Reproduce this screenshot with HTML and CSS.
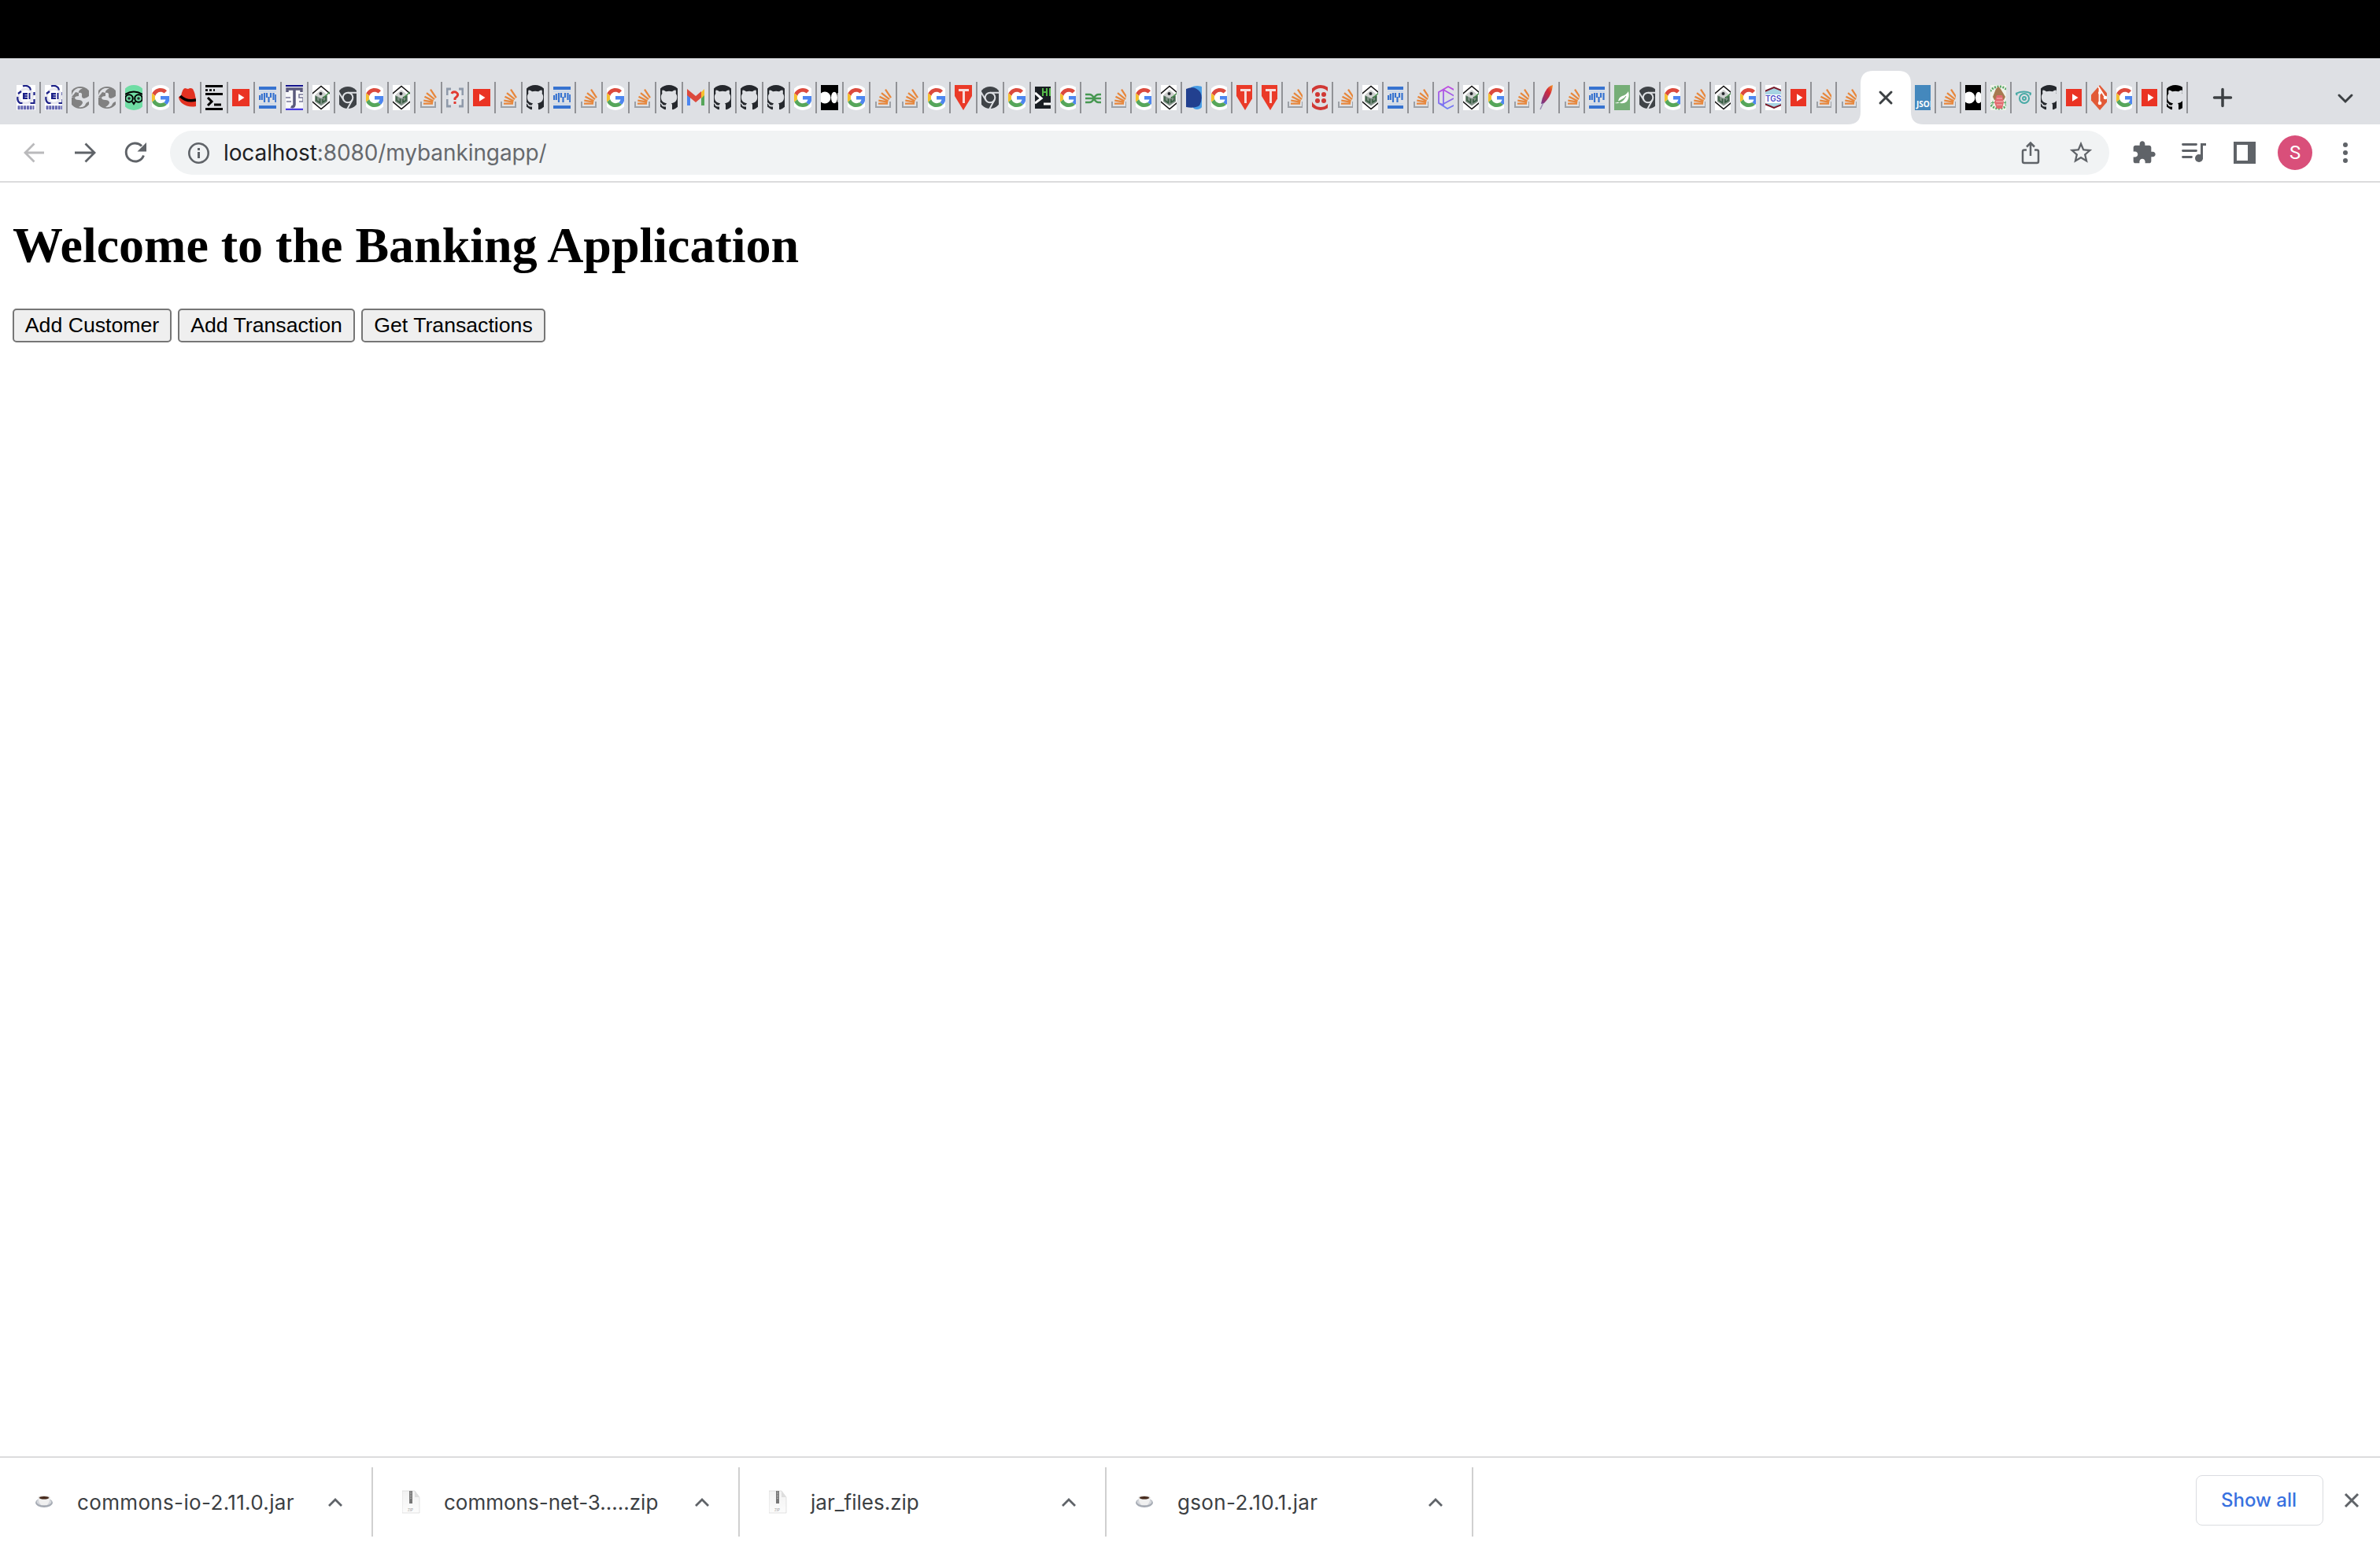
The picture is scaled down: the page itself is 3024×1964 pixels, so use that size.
FILE: index.html
```
<!DOCTYPE html>
<html lang="en">
<head>
<meta charset="utf-8">
<title>Banking Application</title>
<link rel="stylesheet" href="styles.css">
</head>
<body>
<svg class="sprites" aria-hidden="true">
  <defs>
    <linearGradient id="feather-fill" x1="1" y1="0" x2="0" y2="1"><stop offset="0" stop-color="#f79a23"/><stop offset=".35" stop-color="#d4293a"/><stop offset="1" stop-color="#6d3b8f"/></linearGradient>
    <linearGradient id="cube-line" x1="0" y1="0" x2="0" y2="1"><stop offset="0" stop-color="#c14be0"/><stop offset="1" stop-color="#6c7cf5"/></linearGradient>
    <linearGradient id="paper" x1="0" y1="0" x2="0" y2="1"><stop offset="0" stop-color="#f2f2f2"/><stop offset="1" stop-color="#fcfcfc"/></linearGradient>
    <g id="arctic"><rect width="24" height="32" fill="#fff"/><circle cx="11.500" cy="14" r="9" fill="none" stroke="#e6e6ee" stroke-width="3"/><path d="M8 1.500q5-2 9 2l1 3M1.500 15q-1 6 3 8h3M22.500 9v4M22.500 18v5h-5M2 11l4-3" fill="none" stroke="#1c2188" stroke-width="2.200"/><path d="M8 10h6v8H8zM15.500 10h2v8h-2z" fill="#1c2188"/><path d="M10.500 12.700h3.500M10.500 15.400h3.500" stroke="#c9cae8"/><path d="M1.500 28.700h21" stroke="#6466b0" stroke-width="5" stroke-dasharray="3 .8"/></g>
    <g id="globe"><ellipse cx="11" cy="16" rx="14" ry="14" fill="#818181"/><path d="M14 4q-6 3-5 6 5-1 4 4 0 3 3 3 4-1 6-3v7q-4 1-5 5-3 3-8 2 5-3 5-6-1-3-5-3-5 0-5-3-2-1-4 0v-3q2-7 8-9z" fill="#dee0e4"/><path d="M0 15q3-3 5-6l4 1v4q-4 0-5 2z" fill="#818181"/></g>
    <g id="trip"><circle cx="11" cy="16" r="16" fill="#6fdda4"/><circle cx="5" cy="17" r="4.800" fill="none" stroke="#000" stroke-width="2"/><circle cx="17" cy="17" r="4.800" fill="none" stroke="#000" stroke-width="2"/><circle cx="5" cy="17" r="1.800"/><circle cx="17" cy="17" r="1.800"/><path d="M0 12q11-7 22 0M9 21l2 3 2-3" fill="none" stroke="#000" stroke-width="2"/></g>
    <g id="google"><circle cx="11" cy="16" r="16" fill="#fff"/><g transform="translate(-1 4) scale(.5)"><path fill="#dc4a3d" d="M24 9.500c3.540 0 6.710 1.220 9.210 3.600l6.850-6.850C35.900 2.380 30.470 0 24 0 14.620 0 6.510 5.380 2.560 13.220l7.980 6.190C12.430 13.720 17.740 9.500 24 9.500z"/><path fill="#4d86f0" d="M46.980 24.550c0-1.570-.15-3.090-.38-4.550H24v9.020h12.940c-.58 2.960-2.260 5.480-4.780 7.180l7.730 6c4.510-4.180 7.090-10.360 7.090-17.650z"/><path fill="#f5c02e" d="M10.530 28.590c-.48-1.450-.76-2.990-.76-4.590s.27-3.140.76-4.590l-7.980-6.190C.92 16.460 0 20.120 0 24c0 3.880.92 7.540 2.560 10.780l7.970-6.190z"/><path fill="#56a65a" d="M24 48c6.480 0 11.930-2.130 15.890-5.810l-7.730-6c-2.150 1.450-4.920 2.300-8.160 2.300-6.260 0-11.570-4.220-13.470-9.910l-7.980 6.190C6.510 42.620 14.620 48 24 48z"/></g></g>
    <g id="redhat"><path d="M3 14Q5 4 8 4l4 1q3-2 6 0 3 6 3 9l1 4v9Q12 29 4 23q-4-4-4-8z" fill="#e23222"/><path d="M2 14q8 8 20 5" fill="none" stroke="#000" stroke-width="3.500"/></g>
    <g id="terminal"><path d="M0 1.500h22M0 11.500h22M0 30.500h22M11 25h9" stroke="#000" stroke-width="3"/><path d="M0 6.500h12" stroke="#000" stroke-width="2.500" stroke-dasharray="3 2"/><path d="M3 16l5 5-5 5" fill="none" stroke="#000" stroke-width="3"/></g>
    <g id="youtube"><path d="M0 5h22v22H0z" fill="#ea3323"/><path d="M8 11.300v9.400l7.500-4.700z" fill="#fff"/></g>
    <g id="mvn"><path d="M0 4h22M0 28h22" stroke="#3773d0" stroke-width="4"/><path d="M0 8h22M0 24h22" stroke="#ccd9eb" stroke-width="2"/><path d="M1 13v6M3.800 11v8M7 10v12M10 10v6M12.500 15v7M15 10v6M18.500 10v9M21.300 12v10" fill="none" stroke="#3773d0" stroke-width="2.200"/></g>
    <g id="tjs"><path d="M0 0h22v32H0z" fill="#f8f8fa"/><path d="M0 1h22" stroke="#12128c" stroke-width="2"/><path d="M0 31h22" stroke="#4a3be0" stroke-width="2.500"/><path d="M2 9V5h18v4M11 5v20q-1 4-4 2" fill="none" stroke="#59597c" stroke-width="3.500"/><path d="M0 16h6M1 21h6M22 12h-5v4h5v5h-5" fill="none" stroke="#777799" stroke-width="1.500"/></g>
    <g id="cube"><path d="M0 0h22v32H0z" fill="#fff"/><path d="M-1 11.500L11 1.500l12 10M-1 20.500l12 10 12-10" fill="none" stroke="#111" stroke-width="1.500"/><path d="M4 12l7-6 7 6v10l-7 5-7-5z" fill="#cfd1d0"/><path d="M3 13l8 4 8-4v8l-8 5-8-5z" fill="#7f9085"/><path d="M5 14.500v5l4.500 3v-5M13 18v4l4-2.500v-5l-4 1.500" fill="none" stroke="#335a3e" stroke-width="1.500"/><path d="M14 16l8-7" stroke="#4c9050" stroke-width="1.600"/><circle cx="10.500" cy="11" r="2"/></g>
    <g id="chrome"><circle cx="11" cy="16" r="14" fill="#3f4347"/><circle cx="11" cy="16" r="6.300" fill="#3f4347" stroke="#dee0e4" stroke-width="2"/><path d="M11 9.700h14M5.500 19L-2 7M16.500 19L10 31" stroke="#dee0e4" stroke-width="2"/></g>
    <g id="stack"><path d="M2 21v7h18v-7" fill="none" stroke="#9da1a7" stroke-width="2"/><path d="M5 24h12M5.300 20l12 2M6.500 15l11 5.500M9 10.500l10 8M14 6l7 10.500" transform="translate(0 -.3)" stroke="#e7873c" stroke-width="2.300"/></g>
    <g id="missing"><path d="M6 5H1v8M16 5h5v8M1 18v9h5M21 18v9h-5" fill="none" stroke="#8f9aaa" stroke-width="3"/><path d="M3 7h16v18H3z" fill="#e4e7eb"/><path d="M7 11q1-3 5-2 4 2 2 5l-3 3v2M11 21v3" fill="none" stroke="#e13b32" stroke-width="3"/></g>
    <path id="github" transform="translate(-5 0) scale(2)" d="M8 0C3.580 0 0 3.580 0 8c0 3.540 2.290 6.530 5.470 7.590.4.070.55-.17.55-.38 0-.19-.01-.82-.01-1.490-2.010.37-2.530-.49-2.690-.94-.09-.23-.48-.94-.82-1.130-.28-.15-.68-.52-.01-.53.63-.01 1.080.58 1.230.82.72 1.210 1.870.87 2.330.66.070-.52.280-.87.510-1.070-1.780-.2-3.640-.89-3.640-3.950 0-.87.310-1.590.820-2.150-.08-.2-.36-1.020.08-2.120 0 0 .67-.21 2.200.82.640-.18 1.320-.27 2-.27.680 0 1.360.09 2 .27 1.530-1.040 2.200-.82 2.200-.82.440 1.100.160 1.920.080 2.120.510.560.820 1.270.820 2.150 0 3.070-1.870 3.750-3.650 3.950.290.250.540.730.540 1.480 0 1.070-.01 1.930-.01 2.200 0 .21.150.46.550.38A8.013 8.013 0 0016 8c0-4.420-3.580-8-8-8z"/>
    <g id="gmail"><path d="M0 8v18h4V12z" fill="#4d86f0"/><path d="M22 8v18h-4V12z" fill="#56a65a"/><path d="M18 9l4-4v8l-4 4z" fill="#f5c02e"/><path d="M0 5l11 9 7-6v8l-7 6L0 13z" fill="#dc4a3d"/></g>
    <g id="medium"><path d="M0 0h22v32H0z" fill="#000"/><ellipse cx="5" cy="16" rx="7.500" ry="7.500" fill="#fff"/><ellipse cx="17" cy="16" rx="4" ry="7.300" fill="#fff"/><path d="M21.800 10v12" stroke="#fff"/></g>
    <g id="tee"><path d="M0 0h22v14L11 32 0 14z" fill="#ea3a28"/><path d="M5 6.500h13M11.500 6v17" stroke="#f7dcda" stroke-width="3"/></g>
    <g id="hq"><path d="M0 2h22v28H0z" fill="#191e23"/><path d="M0 10l8 7-8 6M11 24h11" fill="none" stroke="#fff" stroke-width="3"/><path d="M10 4v10M15 4v10M10 9h5M22 5h-3v8h3" fill="none" stroke="#55b948" stroke-width="2"/></g>
    <path id="gfg" d="M0 12h5q4 0 6 5 2-5 6-5h5M0 22h5q4 0 6-5 2 5 6 5h5M0 17h22" fill="none" stroke="#479852" stroke-width="2.500"/>
    <g id="blob"><path d="M6 3q8-4 16 0v23q-5 7-12 4L4 22z" fill="#489de5"/><path d="M0 5q11-5 18 4 4 8-1 17-6 4-17 2z" fill="#22408f"/></g>
    <g id="twilio"><circle cx="11" cy="16" r="14" fill="none" stroke="#d03834" stroke-width="4"/><g fill="#d03834"><circle cx="7" cy="12" r="3"/><circle cx="15" cy="12" r="3"/><circle cx="7" cy="20" r="3"/><circle cx="15" cy="20" r="3"/></g></g>
    <path id="hexagon" d="M22 7L13 2 1 9v14l11 7 10-5M1 9l6-3v19l-6-2M7 6l14 8M7 24l13-7" fill="none" stroke="url(#cube-line)" stroke-width="1.800"/>
    <g id="feather"><path d="M2 31L8 18" stroke="#9b8bb1" stroke-width="1.500"/><path d="M18 0q-6 1-10 9-4 8-5 15l4-1Q15 15 17 6z" fill="url(#feather-fill)"/></g>
    <g id="leaf"><path d="M0 0h22v32H0z" fill="#76ae77"/><path d="M18 8q2 8-2 13-5 4-11 1 0-6 5-8 5-1 8-6zM1 23q8 2 14-8" fill="#fff"/><path d="M2 22q9-1 13-8" fill="none" stroke="#76ae77"/></g>
    <g id="tgs"><path d="M0 0h22v32H0z" fill="#fff"/><path d="M-1 8l12-6 12 6v16l-12 6-12-6z" fill="#a6d3e2"/><path d="M0 12h22v11H0z" fill="#fff"/><path d="M-1 8l12-5 12 5M-1 24l12 5 12-5" fill="none" stroke="#7b1828" stroke-width="2"/><text x="0" y="21" font-size="10" font-family="Inter,sans-serif" font-weight="600" fill="#4848c6">TGS</text></g>
    <g id="json"><path d="M0 0h22v32H0z" fill="#4488bd"/><text x="2" y="28" font-size="10" font-family="Open Sans,sans-serif" font-weight="700" fill="#fff">JSON</text></g>
    <g id="rabbit"><path d="M0 0h22v32H0z" fill="#f0f2ea"/><circle cx="11" cy="16" r="14" fill="none" stroke="#58a866" stroke-width="3" stroke-dasharray="2 1.500"/><path d="M7 5l3-3 3 3 6 10-2 4H5l-2-4z" fill="#a77a50"/><path d="M8 13h7l2 9-2 8H8l-3-8z" fill="#e26a70"/><path d="M8 17h7M7 21h9M8 25h7" stroke="#f3c2bd"/><path d="M3 20v5M1 22.500h4M19 20v5M17 22.500h4" stroke="#58a866"/></g>
    <g id="eye" fill="none" stroke="#49aaa6" stroke-width="2"><path d="M0 11q11-5 20 0M0 10l2 3M20 10l-2 3"/><circle cx="11" cy="17" r="6"/><circle cx="11" cy="17" r="2"/></g>
    <g id="git"><path d="M11 0l14 16-14 16L-3 16z" fill="#e25a37"/><path d="M10.500 4v20M9 2l9 14" stroke="#fff" stroke-width="1.800"/><g fill="#fff"><circle cx="11" cy="10" r="2"/><circle cx="11" cy="23" r="2.300"/><circle cx="18" cy="16" r="2.300"/></g></g>
    <g id="cup"><ellipse cx="11" cy="17" rx="11" ry="6" fill="#a4a9b2"/><ellipse cx="11" cy="16" rx="9.500" ry="4.500" fill="#d4d7dc"/><path d="M3.500 10h15q0 7-4 10h-7q-4-3-4-10z" fill="#f0f0f0"/><ellipse cx="11" cy="10.500" rx="7.500" ry="2.500" fill="#d8d5d2"/><ellipse cx="11" cy="10.700" rx="6" ry="1.700" fill="#46291b"/></g>
    <g id="zip"><path d="M0 2h16l6 8v20H0z" fill="url(#paper)" stroke="#d5d5d5" stroke-width=".7"/><path d="M16 2v8h6z" fill="#dedede"/><path d="M11 2v16" stroke="#777" stroke-width="4"/><path d="M11 3v9" stroke="#bbb" stroke-width="1.500" stroke-dasharray="1 1"/><text x="7" y="28" font-size="4.500" font-family="Inter,sans-serif" fill="#999">ZIP</text></g>
  </defs>
</svg>

<div class="bezel"></div>
<nav class="tab-strip">
  <div class="tab first"><svg><use href="#arctic"/></svg></div>
  <div class="tab"><svg><use href="#arctic"/></svg></div>
  <div class="tab"><svg><use href="#globe"/></svg></div>
  <div class="tab"><svg><use href="#globe"/></svg></div>
  <div class="tab"><svg><use href="#trip"/></svg></div>
  <div class="tab"><svg><use href="#google"/></svg></div>
  <div class="tab"><svg><use href="#redhat"/></svg></div>
  <div class="tab"><svg><use href="#terminal"/></svg></div>
  <div class="tab"><svg><use href="#youtube"/></svg></div>
  <div class="tab"><svg><use href="#mvn"/></svg></div>
  <div class="tab"><svg><use href="#tjs"/></svg></div>
  <div class="tab"><svg><use href="#cube"/></svg></div>
  <div class="tab"><svg><use href="#chrome"/></svg></div>
  <div class="tab"><svg><use href="#google"/></svg></div>
  <div class="tab"><svg><use href="#cube"/></svg></div>
  <div class="tab"><svg><use href="#stack"/></svg></div>
  <div class="tab"><svg><use href="#missing"/></svg></div>
  <div class="tab"><svg><use href="#youtube"/></svg></div>
  <div class="tab"><svg><use href="#stack"/></svg></div>
  <div class="tab"><svg><use href="#github"/></svg></div>
  <div class="tab"><svg><use href="#mvn"/></svg></div>
  <div class="tab"><svg><use href="#stack"/></svg></div>
  <div class="tab"><svg><use href="#google"/></svg></div>
  <div class="tab"><svg><use href="#stack"/></svg></div>
  <div class="tab"><svg><use href="#github"/></svg></div>
  <div class="tab"><svg><use href="#gmail"/></svg></div>
  <div class="tab"><svg><use href="#github"/></svg></div>
  <div class="tab"><svg><use href="#github"/></svg></div>
  <div class="tab"><svg><use href="#github"/></svg></div>
  <div class="tab"><svg><use href="#google"/></svg></div>
  <div class="tab"><svg><use href="#medium"/></svg></div>
  <div class="tab"><svg><use href="#google"/></svg></div>
  <div class="tab"><svg><use href="#stack"/></svg></div>
  <div class="tab"><svg><use href="#stack"/></svg></div>
  <div class="tab"><svg><use href="#google"/></svg></div>
  <div class="tab"><svg><use href="#tee"/></svg></div>
  <div class="tab"><svg><use href="#chrome"/></svg></div>
  <div class="tab"><svg><use href="#google"/></svg></div>
  <div class="tab narrow"><svg><use href="#hq"/></svg></div>
  <div class="tab narrow"><svg><use href="#google"/></svg></div>
  <div class="tab narrow"><svg><use href="#gfg"/></svg></div>
  <div class="tab narrow"><svg><use href="#stack"/></svg></div>
  <div class="tab narrow"><svg><use href="#google"/></svg></div>
  <div class="tab narrow"><svg><use href="#cube"/></svg></div>
  <div class="tab narrow"><svg><use href="#blob"/></svg></div>
  <div class="tab narrow"><svg><use href="#google"/></svg></div>
  <div class="tab narrow"><svg><use href="#tee"/></svg></div>
  <div class="tab narrow"><svg><use href="#tee"/></svg></div>
  <div class="tab narrow"><svg><use href="#stack"/></svg></div>
  <div class="tab narrow"><svg><use href="#twilio"/></svg></div>
  <div class="tab narrow"><svg><use href="#stack"/></svg></div>
  <div class="tab narrow"><svg><use href="#cube"/></svg></div>
  <div class="tab narrow"><svg><use href="#mvn"/></svg></div>
  <div class="tab narrow"><svg><use href="#stack"/></svg></div>
  <div class="tab narrow"><svg><use href="#hexagon"/></svg></div>
  <div class="tab narrow"><svg><use href="#cube"/></svg></div>
  <div class="tab narrow"><svg><use href="#google"/></svg></div>
  <div class="tab narrow"><svg><use href="#stack"/></svg></div>
  <div class="tab narrow"><svg><use href="#feather"/></svg></div>
  <div class="tab narrow"><svg><use href="#stack"/></svg></div>
  <div class="tab narrow"><svg><use href="#mvn"/></svg></div>
  <div class="tab narrow"><svg><use href="#leaf"/></svg></div>
  <div class="tab narrow"><svg><use href="#chrome"/></svg></div>
  <div class="tab narrow"><svg><use href="#google"/></svg></div>
  <div class="tab narrow"><svg><use href="#stack"/></svg></div>
  <div class="tab narrow"><svg><use href="#cube"/></svg></div>
  <div class="tab narrow"><svg><use href="#google"/></svg></div>
  <div class="tab narrow"><svg><use href="#tgs"/></svg></div>
  <div class="tab narrow"><svg><use href="#youtube"/></svg></div>
  <div class="tab narrow"><svg><use href="#stack"/></svg></div>
  <div class="tab narrow last"><svg><use href="#stack"/></svg></div>
  <div class="tab-active"><svg class="tab-shape" width="96" height="68"><path d="M0 68q16 0 16-16V16Q16 0 32 0h32q16 0 16 16v36q0 16 16 16z" fill="#fff"/><path d="M41 27l14 14M55 27L41 41" stroke="#3c4043" stroke-width="3" stroke-linecap="round"/></svg></div>
  <div class="tab narrow"><svg><use href="#json"/></svg></div>
  <div class="tab narrow"><svg><use href="#stack"/></svg></div>
  <div class="tab narrow"><svg><use href="#medium"/></svg></div>
  <div class="tab narrow"><svg><use href="#rabbit"/></svg></div>
  <div class="tab narrow"><svg><use href="#eye"/></svg></div>
  <div class="tab narrow"><svg><use href="#github"/></svg></div>
  <div class="tab narrow"><svg><use href="#youtube"/></svg></div>
  <div class="tab narrow"><svg><use href="#git"/></svg></div>
  <div class="tab narrow"><svg><use href="#google"/></svg></div>
  <div class="tab narrow"><svg><use href="#youtube"/></svg></div>
  <div class="tab narrow dark"><svg><use href="#github"/></svg></div>
  <svg class="new-tab" width="28" height="28"><path d="M14 3.500v21M3.500 14h21" stroke="#3c4043" stroke-width="3.500" stroke-linecap="round"/></svg>
  <svg class="tab-search" width="28" height="28"><path d="M6 11l8 8 8-8" fill="none" stroke="#3c4043" stroke-width="3" stroke-linecap="round"/></svg>
</nav>

<header class="toolbar">
  <div class="slot"><svg width="32" height="32"><path d="M28 16H5M15.500 4.500L4 16l11.500 11.500" fill="none" stroke="#bababc" stroke-width="2.800"/></svg></div>
  <div class="slot"><svg width="32" height="32"><path d="M3 16h24M16.500 4.500L28 16 16.500 27.500" fill="none" stroke="#5f6368" stroke-width="2.800"/></svg></div>
  <div class="slot"><svg width="32" height="32"><path d="M26.500 19.500A11.500 11.500 0 1 1 24 7.500" fill="none" stroke="#5f6368" stroke-width="2.900"/><path d="M30 3v11.500H18.500z" fill="#5f6368"/></svg></div>
  <div class="omnibox">
    <svg width="28" height="28"><circle cx="14.500" cy="14.500" r="12.200" fill="none" stroke="#5f6368" stroke-width="2.600"/><path d="M14.500 13v8M14.500 8v3" stroke="#5f6368" stroke-width="3"/></svg>
    <span class="url">localhost<span class="path">:8080/mybankingapp/</span></span>
    <div class="slot push"><svg width="32" height="32"><path d="M11 12.500H8q-2 0-2 2V27q0 2 2 2h16q2 0 2-2V14.500q0-2-2-2h-3M16 20V4M11 8.500l5-5 5 5" fill="none" stroke="#5f6368" stroke-width="2.500"/></svg></div>
    <div class="slot"><svg width="34" height="34" viewBox="0 0 24 24"><path fill="#5f6368" d="M22 9.240l-7.190-.62L12 2 9.190 8.630 2 9.240l5.460 4.730L5.820 21 12 17.270 18.180 21l-1.630-7.030L22 9.240zM12 15.400l-3.760 2.270 1-4.280-3.320-2.880 4.380-.38L12 6.100l1.710 4.040 4.380.38-3.320 2.880 1 4.280L12 15.400z"/></svg></div>
  </div>
  <div class="slot"><svg width="32" height="32" viewBox="0 0 24 24"><path fill="#5f6368" d="M20.500 11H19V7c0-1.100-.9-2-2-2h-4V3.500C13 2.120 11.880 1 10.500 1S8 2.120 8 3.500V5H4c-1.100 0-1.990.9-1.990 2v3.800H3.500c1.490 0 2.700 1.210 2.700 2.700s-1.210 2.700-2.700 2.700H2V20c0 1.100.9 2 2 2h3.800v-1.500c0-1.490 1.210-2.700 2.700-2.700 1.490 0 2.700 1.210 2.700 2.700V22H17c1.100 0 2-.9 2-2v-4h1.500c1.380 0 2.500-1.120 2.500-2.500S21.880 11 20.500 11z"/></svg></div>
  <div class="slot"><svg width="32" height="32"><path d="M1.500 5.500h17M1.500 13.500h17M1.500 21.500h11" stroke="#5f6368" stroke-width="2.800" stroke-linecap="round"/><path d="M25.500 24V5.500H31" fill="none" stroke="#5f6368" stroke-width="3"/><circle cx="22" cy="23" r="5" fill="#5f6368"/></svg></div>
  <div class="slot"><svg width="32" height="32"><path fill="#5f6368" fill-rule="evenodd" d="M2 2h28v28H2zM6 6v20h14V6z"/></svg></div>
  <div class="slot"><span class="avatar">S</span></div>
  <div class="slot"><svg width="32" height="32" fill="#5f6368"><circle cx="16" cy="6" r="3"/><circle cx="16" cy="16" r="3"/><circle cx="16" cy="26" r="3"/></svg></div>
</header>

<main class="page">
  <h1>Welcome to the Banking Application</h1>
  <div class="actions">
    <button class="w-customer">Add Customer</button>
    <button class="w-add">Add Transaction</button>
    <button class="w-get">Get Transactions</button>
  </div>
</main>

<footer class="downloads">
  <div class="download"><svg class="file"><use href="#cup"/></svg><span class="name loose">commons-io-2.11.0.jar</span><svg class="caret" width="20" height="14"><path d="M2 12l8-8 8 8"/></svg></div>
  <div class="download"><svg class="file"><use href="#zip"/></svg><span class="name">commons-net-3.....zip</span><svg class="caret" width="20" height="14"><path d="M2 12l8-8 8 8"/></svg></div>
  <div class="download"><svg class="file"><use href="#zip"/></svg><span class="name">jar_files.zip</span><svg class="caret" width="20" height="14"><path d="M2 12l8-8 8 8"/></svg></div>
  <div class="download"><svg class="file"><use href="#cup"/></svg><span class="name loose">gson-2.10.1.jar</span><svg class="caret" width="20" height="14"><path d="M2 12l8-8 8 8"/></svg></div>
  <button class="show-all">Show all</button>
  <svg class="dismiss" width="20" height="20"><path d="M2 2l16 16M18 2L2 18" stroke="#5f6368" stroke-width="3"/></svg>
</footer>
</body>
</html>
```
FILE: styles.css
```
* { box-sizing: border-box; }
body {
  margin: 0;
  height: 1964px;
  display: flex;
  flex-direction: column;
  background: #fff;
  overflow: hidden;
  font-family: Inter, "Liberation Sans", sans-serif;
}
svg { display: block; flex: none; }
.sprites { position: absolute; width: 0; height: 0; }
.bezel { height: 74px; flex: none; background: #000; }

.tab-strip { height: 84px; flex: none; display: flex; align-items: center; padding-top: 16px; background: #dee0e4; }
.tab { flex: none; width: 34px; height: 40px; padding: 0 5px; display: flex; align-items: center; border-right: 2px solid #919296; }
.tab svg { width: 22px; height: 32px; overflow: hidden; fill: #25282d; }
.tab.first { width: 52px; padding-left: 21px; }
.tab.first svg { width: 24px; }
.tab.narrow { width: 32px; }
.tab.narrow svg { width: 20px; }
.tab.last { width: 30px; border-right: 0; }
.tab.dark svg { fill: #000; }
.tab-active { flex: none; width: 64px; height: 68px; }
.tab-shape { margin-left: -16px; }
.new-tab { margin-left: 30px; }
.tab-search { margin-left: auto; margin-right: 30px; }

.toolbar { height: 74px; flex: none; display: flex; align-items: center; padding: 0 12px; border-bottom: 2px solid #dcdcdd; }
.slot { flex: none; width: 64px; display: flex; justify-content: center; }
.omnibox { flex: 1; height: 56px; margin: 0 12px; padding: 0 4px 0 22px; border-radius: 28px; background: #f1f3f4; display: flex; align-items: center; }
.push { margin-left: auto; }
.url { margin-left: 18px; font-size: 28px; line-height: 34px; letter-spacing: -.1px; color: #202124; white-space: nowrap; }
.path { color: #66696d; }
.avatar { width: 44px; height: 44px; border-radius: 50%; background: #d94f7a; color: #fff; font: 24px/44px Roboto, sans-serif; text-align: center; }

.page { flex: 1; padding: 0 16px; }
.page h1 { margin: 43px 0; font: bold 64px/74px "Liberation Serif", "Times New Roman", serif; color: #000; }
.actions { display: flex; gap: 8px; }
.actions button { height: 43px; padding: 0 0 2px; border: 2px solid #767676; border-radius: 5px; background: #efefef; color: #000; font: 26.67px/36px "Liberation Sans", Arial, sans-serif; white-space: nowrap; }
.w-customer { width: 202px; }
.w-add { width: 225px; }
.w-get { width: 234px; }

.downloads { flex: none; height: 114px; display: flex; align-items: flex-start; padding: 12px 0 0 8px; border-top: 2px solid #dcdcdd; }
.download { flex: none; width: 466px; height: 88px; padding: 0 36px 0 37px; display: flex; align-items: center; border-right: 2px solid #d0d0d0; }
.file { width: 23px; height: 32px; }
.file + .name { margin-left: 30px; }
.name { padding-top: 2px; font-size: 26px; line-height: 32px; color: #3c4043; white-space: nowrap; }
.loose { letter-spacing: .35px; }
.caret { margin-left: auto; fill: none; stroke: #5f6368; stroke-width: 2.8px; }
.show-all { margin: 10px 26px 0 auto; width: 162px; height: 64px; padding: 0 2px 0 0; border: 1px solid #dadce0; border-radius: 8px; background: #fff; color: #3871e0; font: 500 24px/30px Inter, sans-serif; }
.dismiss { margin: 32px 26px 0 0; }
```
